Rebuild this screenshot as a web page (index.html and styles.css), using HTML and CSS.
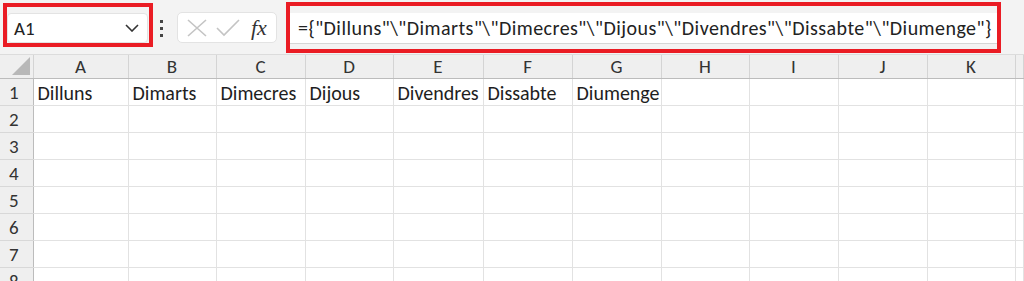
FILE: index.html
```html
<!DOCTYPE html>
<html lang="ca">
<head>
  <meta charset="UTF-8">
  <title>Full de càlcul</title>
  <link rel="stylesheet" href="styles.css">
</head>
<body>
  <div class="toolbar">
    <div class="mark mark-name">
      <div class="name-box">
        <span>A1</span>
        <svg class="chevron" width="14" height="8" viewBox="0 0 14 8"><path d="M1 1 L7 7 L13 1" fill="none" stroke="#333" stroke-width="1.6"/></svg>
      </div>
    </div>
    <div class="dots"><i></i><i></i><i></i></div>
    <div class="fx-group">
      <svg width="20" height="18" viewBox="0 0 20 18"><path d="M1 1 L19 17 M19 1 L1 17" stroke="#c4c4c4" stroke-width="1.6" fill="none"/></svg>
      <svg width="24" height="18" viewBox="0 0 24 18"><path d="M1 9 L8 16 L23 1" stroke="#c4c4c4" stroke-width="1.6" fill="none"/></svg>
      <span class="fx">fx</span>
    </div>
    <div class="mark mark-formula">
      <div class="formula">={"Dilluns"\"Dimarts"\"Dimecres"\"Dijous"\"Divendres"\"Dissabte"\"Diumenge"}</div>
    </div>
  </div>

  <table class="sheet">
    <colgroup>
      <col style="width:33px"><col style="width:95px"><col style="width:88px"><col style="width:89px">
      <col style="width:88px"><col style="width:90px"><col style="width:89px"><col style="width:89px">
      <col style="width:88px"><col style="width:89px"><col style="width:89px"><col style="width:88px">
      <col>
    </colgroup>
    <tr class="col-heads">
      <th class="corner"><span class="tri"></span></th>
      <th>A</th><th>B</th><th>C</th><th>D</th><th>E</th><th>F</th><th>G</th><th>H</th><th>I</th><th>J</th><th>K</th><th></th>
    </tr>
    <tr>
      <th class="row-head">1</th>
      <td>Dilluns</td><td>Dimarts</td><td>Dimecres</td><td>Dijous</td><td>Divendres</td><td>Dissabte</td><td>Diumenge</td><td></td><td></td><td></td><td></td><td></td>
    </tr>
    <tr><th class="row-head">2</th><td></td><td></td><td></td><td></td><td></td><td></td><td></td><td></td><td></td><td></td><td></td><td></td></tr>
    <tr><th class="row-head">3</th><td></td><td></td><td></td><td></td><td></td><td></td><td></td><td></td><td></td><td></td><td></td><td></td></tr>
    <tr><th class="row-head">4</th><td></td><td></td><td></td><td></td><td></td><td></td><td></td><td></td><td></td><td></td><td></td><td></td></tr>
    <tr><th class="row-head">5</th><td></td><td></td><td></td><td></td><td></td><td></td><td></td><td></td><td></td><td></td><td></td><td></td></tr>
    <tr><th class="row-head">6</th><td></td><td></td><td></td><td></td><td></td><td></td><td></td><td></td><td></td><td></td><td></td><td></td></tr>
    <tr><th class="row-head">7</th><td></td><td></td><td></td><td></td><td></td><td></td><td></td><td></td><td></td><td></td><td></td><td></td></tr>
    <tr><th class="row-head">8</th><td></td><td></td><td></td><td></td><td></td><td></td><td></td><td></td><td></td><td></td><td></td><td></td></tr>
  </table>
</body>
</html>
```

FILE: styles.css
```css
body, html {
  margin: 0;
  padding: 0;
  background-color: #fff;
  font-family: Carlito, Lato, "Liberation Sans", sans-serif;
  color: #222;
  overflow: hidden;
}

.toolbar {
  display: flex;
  align-items: flex-start;
  height: 55px;
  padding: 3px 0 0 3px;
  box-sizing: border-box;
  background-color: #f3f3f3;
  border-bottom: 1px solid #dcdcdc;
}

.mark {
  border: 4px solid #ea1c24;
  box-sizing: border-box;
}

.mark-name {
  width: 150px;
  height: 44px;
  padding-top: 6px;
}

.name-box {
  display: flex;
  align-items: center;
  justify-content: space-between;
  width: 141px;
  height: 30px;
  box-sizing: border-box;
  padding: 0 8px 0 6px;
  background-color: #fff;
  border: 1px solid #e3e3e3;
  border-radius: 4px;
  font-size: 19px;
}

.dots {
  display: flex;
  flex-direction: column;
  gap: 4px;
  margin: 17px 0 0 7px;
  width: 17px;
}

.dots i {
  display: block;
  width: 3px;
  height: 3px;
  background-color: #444;
}

.fx-group {
  display: flex;
  align-items: center;
  gap: 9px;
  width: 100px;
  height: 31px;
  margin-top: 9px;
  padding-left: 9px;
  box-sizing: border-box;
  background-color: #fff;
  border: 1px solid #e3e3e3;
  border-radius: 5px;
}

.fx {
  font-family: "Liberation Serif", serif;
  font-style: italic;
  font-size: 22px;
  color: #333;
  margin-left: 2px;
}

.mark-formula {
  width: 715px;
  height: 51px;
  margin: -1px 0 0 9px;
  padding-top: 7px;
}

.formula {
  height: 31px;
  line-height: 30px;
  box-sizing: border-box;
  padding-left: 8px;
  background-color: #fff;
  border-bottom: 1px solid #d6d6d6;
  font-size: 20px;
  letter-spacing: 0.45px;
  white-space: nowrap;
}

.sheet {
  border-collapse: collapse;
  table-layout: fixed;
  width: 100%;
  font-size: 20px;
}

.sheet th, .sheet td {
  padding: 0;
  overflow: visible;
  white-space: nowrap;
}

.col-heads th {
  height: 23px;
  background-color: #efefef;
  border-right: 1px solid #d4d4d4;
  border-bottom: 1px solid #bcbcbc;
  font-weight: normal;
  font-size: 19px;
  color: #333;
  text-align: center;
  line-height: 23px;
}

.corner {
  position: relative;
}

.tri {
  position: absolute;
  right: 3px;
  bottom: 3px;
  width: 0;
  height: 0;
  border-left: 18px solid transparent;
  border-bottom: 18px solid #b8b8b8;
}

.row-head {
  height: 26px;
  background-color: #efefef;
  border-right: 1px solid #bcbcbc;
  border-bottom: 1px solid #d8d8d8;
  font-weight: normal;
  font-size: 19px;
  color: #333;
  text-align: center;
  padding-right: 5px !important;
  vertical-align: bottom;
  line-height: 24px;
}

.sheet td {
  border-right: 1px solid #e2e2e2;
  border-bottom: 1px solid #e2e2e2;
  padding-left: 4px;
  vertical-align: bottom;
  line-height: 24px;
  color: #1e1e1e;
}
```
